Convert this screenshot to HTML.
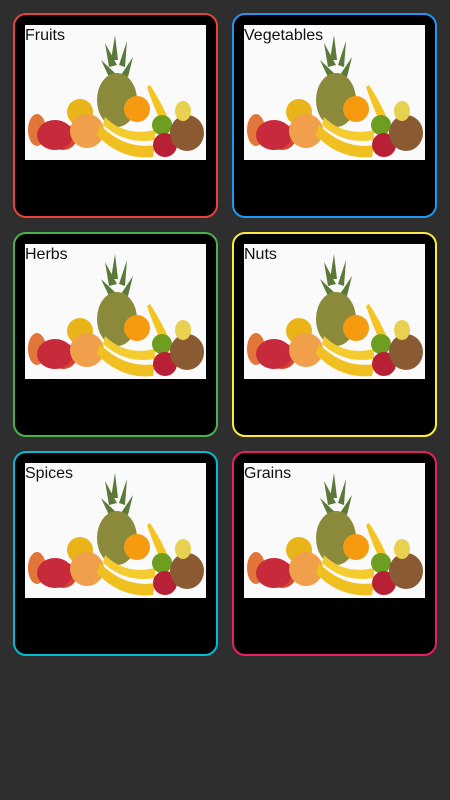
<!DOCTYPE html>
<html><head><style>
body{margin:0;background:#2e2e2e;width:450px;height:800px;position:relative;overflow:hidden;font-family:"Liberation Sans",sans-serif}
.c{position:absolute;width:201px;height:201px;border:2px solid;border-radius:13px;background:#000;box-sizing:content-box}
.img{position:absolute;left:10px;top:10px;width:181px;height:135px;background:#fff}
.img svg{position:absolute;left:0;top:0}
.t{position:absolute;left:0;top:2px;font-size:16px;color:#111;z-index:2}
</style></head><body>
<svg width="0" height="0" style="position:absolute">
<defs><g id="f">
<rect width="181" height="135" fill="#fafafa"/>
<g fill="#5b7a3a"><path d="M90 10 L93 35 L86 35Z"/><path d="M80 18 L92 40 L84 42Z"/><path d="M102 16 L94 40 L100 42Z"/><path d="M76 35 L92 50 L84 52Z"/><path d="M108 32 L96 50 L103 52Z"/></g>
<ellipse cx="92" cy="75" rx="20" ry="27" fill="#8a8a3a"/>
<ellipse cx="55" cy="87" rx="13" ry="13" fill="#e9b418"/>
<ellipse cx="12" cy="105" rx="9" ry="16" fill="#e2763a"/>
<ellipse cx="38" cy="112" rx="14" ry="13" fill="#d8452f"/>
<ellipse cx="30" cy="110" rx="18" ry="15" fill="#c72a3b"/>
<ellipse cx="62" cy="106" rx="17" ry="17" fill="#f0a04a"/>
<path d="M75 100 Q100 125 130 120 L128 132 Q95 135 72 110Z" fill="#f0c020"/>
<path d="M80 92 Q100 112 130 105 L130 115 Q100 120 78 100Z" fill="#f5cc30"/>
<path d="M125 60 Q138 80 145 98 L138 102 Q128 80 122 62Z" fill="#f3c422"/>
<circle cx="112" cy="84" r="13" fill="#f69a10"/>
<circle cx="137" cy="100" r="10" fill="#6d9e20"/>
<circle cx="140" cy="120" r="12" fill="#b82035"/>
<ellipse cx="162" cy="108" rx="17" ry="18" fill="#8a5a32"/>
<ellipse cx="158" cy="86" rx="8" ry="10" fill="#e8d050"/>
</g></defs></svg>

<div class="c" style="left:13px;top:13px;border-color:#e8433a"><div class="img"><svg width="181" height="135"><use href="#f"/></svg><div class="t">Fruits</div></div></div>
<div class="c" style="left:232px;top:13px;border-color:#2196f3"><div class="img"><svg width="181" height="135"><use href="#f"/></svg><div class="t">Vegetables</div></div></div>
<div class="c" style="left:13px;top:232px;border-color:#4caf50"><div class="img"><svg width="181" height="135"><use href="#f"/></svg><div class="t">Herbs</div></div></div>
<div class="c" style="left:232px;top:232px;border-color:#ffeb3b"><div class="img"><svg width="181" height="135"><use href="#f"/></svg><div class="t">Nuts</div></div></div>
<div class="c" style="left:13px;top:451px;border-color:#00bcd4"><div class="img"><svg width="181" height="135"><use href="#f"/></svg><div class="t">Spices</div></div></div>
<div class="c" style="left:232px;top:451px;border-color:#e91e63"><div class="img"><svg width="181" height="135"><use href="#f"/></svg><div class="t">Grains</div></div></div>
</body></html>
